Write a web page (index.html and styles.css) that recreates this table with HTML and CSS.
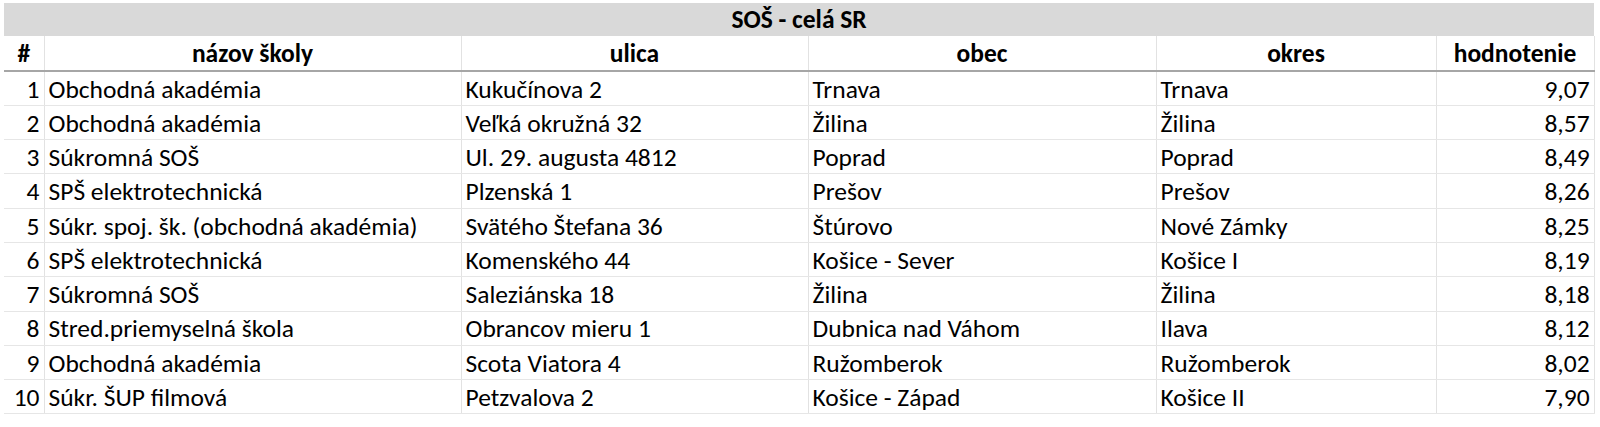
FILE: index.html
```html
<!DOCTYPE html>
<html lang="sk">
<head>
<meta charset="utf-8">
<title>SOŠ - celá SR</title>
<link rel="stylesheet" href="styles.css">
</head>
<body>
<table class="sheet">
  <colgroup>
    <col class="c-num">
    <col class="c-name">
    <col class="c-street">
    <col class="c-town">
    <col class="c-district">
    <col class="c-score">
  </colgroup>
  <thead>
    <tr class="title-row"><th colspan="6">SOŠ - celá SR</th></tr>
    <tr class="head-row">
      <th>#</th>
      <th>názov školy</th>
      <th>ulica</th>
      <th>obec</th>
      <th>okres</th>
      <th>hodnotenie</th>
    </tr>
  </thead>
  <tbody>
    <tr><td class="num">1</td><td>Obchodná akadémia</td><td>Kukučínova 2</td><td>Trnava</td><td>Trnava</td><td class="num">9,07</td></tr>
    <tr><td class="num">2</td><td>Obchodná akadémia</td><td>Veľká okružná 32</td><td>Žilina</td><td>Žilina</td><td class="num">8,57</td></tr>
    <tr><td class="num">3</td><td>Súkromná SOŠ</td><td>Ul. 29. augusta 4812</td><td>Poprad</td><td>Poprad</td><td class="num">8,49</td></tr>
    <tr><td class="num">4</td><td>SPŠ elektrotechnická</td><td>Plzenská 1</td><td>Prešov</td><td>Prešov</td><td class="num">8,26</td></tr>
    <tr><td class="num">5</td><td>Súkr. spoj. šk. (obchodná akadémia)</td><td>Svätého Štefana 36</td><td>Štúrovo</td><td>Nové Zámky</td><td class="num">8,25</td></tr>
    <tr><td class="num">6</td><td>SPŠ elektrotechnická</td><td>Komenského 44</td><td>Košice - Sever</td><td>Košice I</td><td class="num">8,19</td></tr>
    <tr><td class="num">7</td><td>Súkromná SOŠ</td><td>Saleziánska 18</td><td>Žilina</td><td>Žilina</td><td class="num">8,18</td></tr>
    <tr><td class="num">8</td><td>Stred.priemyselná škola</td><td>Obrancov mieru 1</td><td>Dubnica nad Váhom</td><td>Ilava</td><td class="num">8,12</td></tr>
    <tr><td class="num">9</td><td>Obchodná akadémia</td><td>Scota Viatora 4</td><td>Ružomberok</td><td>Ružomberok</td><td class="num">8,02</td></tr>
    <tr><td class="num">10</td><td>Súkr. ŠUP filmová</td><td>Petzvalova 2</td><td>Košice - Západ</td><td>Košice II</td><td class="num">7,90</td></tr>
  </tbody>
</table>
</body>
</html>
```
FILE: styles.css
```css
html, body {
  margin: 0;
  padding: 0;
  background: #ffffff;
}

body {
  padding: 3px 0 0 4px;
  font-family: Carlito, Calibri, Lato, "Liberation Sans", sans-serif;
  color: #000000;
}

.sheet {
  border-collapse: collapse;
  table-layout: fixed;
  width: 1590px;
  font-size: 25.5px;
}

.c-num { width: 40px; }
.c-name { width: 417px; }
.c-street { width: 347px; }
.c-town { width: 348px; }
.c-district { width: 280px; }
.c-score { width: 158px; }

.sheet th,
.sheet td {
  box-sizing: border-box;
  padding: 0 4px;
  white-space: nowrap;
  overflow: hidden;
  vertical-align: middle;
  line-height: 1;
}

.title-row th {
  background: #d9d9d9;
  height: 33px;
  text-align: center;
  font-weight: 700;
  padding-top: 1px;
}

.head-row th {
  height: 35px;
  text-align: center;
  font-weight: 700;
  border-left: 1px solid #e2e2e2;
  border-bottom: 2px solid #a6a6a6;
  padding-top: 1px;
}

.head-row th:first-child {
  border-left: 0;
}

.sheet td {
  height: 34.3px;
  text-align: left;
  border-left: 1px solid #e2e2e2;
  border-bottom: 1px solid #e6e6e6;
  padding-top: 2px;
}

.sheet td:first-child {
  border-left: 0;
}

.sheet td.num {
  text-align: right;
}

.sheet tr td:last-child,
.head-row th:last-child {
  border-right: 1px solid #e2e2e2;
}
```
